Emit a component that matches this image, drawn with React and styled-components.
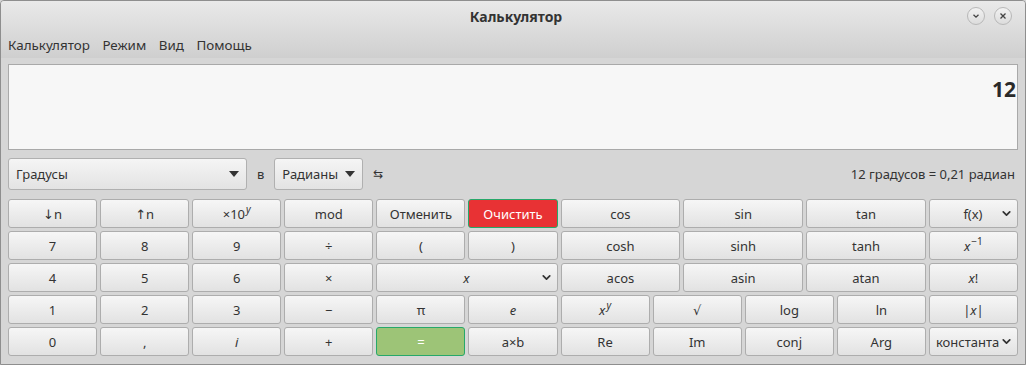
import React from 'react';
import styled, { createGlobalStyle } from 'styled-components';
import { ChevronDown } from 'lucide-react';

const Global = createGlobalStyle`
  html, body { margin: 0; padding: 0; }
  body { font-family: "Noto Sans", "DejaVu Sans", sans-serif; color: #333; background: #d6d6d6; }
`;

const Window = styled.div`
  width: 1026px;
  height: 365px;
  box-sizing: border-box;
  border: 1px solid #8e8e8e;
  border-radius: 4px 4px 0 0;
  background: #d6d6d6;
  display: flex;
  flex-direction: column;
  overflow: hidden;
`;

const Header = styled.div`
  background: linear-gradient(#e9e9e9, #cfcfcf);
`;

const TitleBar = styled.div`
  height: 31px;
  display: flex;
  align-items: center;
  justify-content: center;
  position: relative;
`;

const Title = styled.div`
  font-weight: bold;
  font-size: 14px;
  color: #333;
  margin-left: 6px;
`;

const WinButtons = styled.div`
  position: absolute;
  right: 13px;
  top: 6px;
  display: flex;
  gap: 9px;
`;

const WinButton = styled.div`
  width: 16px;
  height: 16px;
  border-radius: 50%;
  border: 1px solid #b8b8b8;
  background: linear-gradient(#f2f2f2, #dcdcdc);
  display: flex;
  align-items: center;
  justify-content: center;
  color: #555;
`;

const MenuBar = styled.div`
  height: 26px;
  display: flex;
  align-items: center;
  padding-left: 7px;
  gap: 12.5px;
  font-size: 13.4px;
  color: #333;
`;

const Body = styled.div`
  padding: 6px 7px 0;
  display: flex;
  flex-direction: column;
`;

const Display = styled.div`
  height: 86px;
  box-sizing: border-box;
  border: 1px solid #a9a9a9;
  background: #f7f7f7;
  display: flex;
  justify-content: flex-end;
  align-items: flex-start;
  padding: 10px 1px 0 0;
  font-size: 21px;
  font-weight: bold;
  color: #2a2a2a;
`;

const ConvRow = styled.div`
  margin-top: 8px;
  height: 32px;
  display: flex;
  align-items: center;
  font-size: 13px;
`;

const Combo = styled.div`
  width: ${p => p.w}px;
  height: 32px;
  box-sizing: border-box;
  border: 1px solid #b0b0b0;
  border-radius: 3px;
  background: linear-gradient(#f5f5f5, #e3e3e3);
  display: flex;
  align-items: center;
  justify-content: space-between;
  padding: 0 7px;
  color: #333;
`;

const Triangle = styled.span`
  width: 0;
  height: 0;
  border-left: 5px solid transparent;
  border-right: 5px solid transparent;
  border-top: 6px solid #333;
`;

const ConvLabel = styled.span`
  margin: 0 10px 0 10px;
  color: #333;
`;

const Swap = styled.span`
  margin-left: 10px;
  font-family: "DejaVu Sans", sans-serif;
  font-size: 12px;
  color: #333;
`;

const ConvResult = styled.span`
  margin-left: auto;
  margin-right: 3px;
  color: #333;
`;

const Keypad = styled.div`
  margin-top: 9px;
  display: grid;
  grid-template-columns: repeat(11, 1fr);
  grid-template-rows: repeat(5, 29px);
  gap: 3px;
`;

const Trig = styled.div`
  grid-column: 7 / 11;
  grid-row: 1 / 4;
  display: grid;
  grid-template-columns: repeat(3, 1fr);
  grid-template-rows: repeat(3, 29px);
  gap: 3px;
`;

const Key = styled.div`
  box-sizing: border-box;
  border: 1px solid ${p => p.$variant === 'clear' || p.$variant === 'equals' ? '#27a86a' : '#adadad'};
  border-radius: 3px;
  background: ${p =>
    p.$variant === 'clear' ? '#e83234' :
    p.$variant === 'equals' ? '#9dc477' :
    'linear-gradient(#f6f6f6, #e2e2e2)'};
  color: ${p => (p.$variant ? '#fff' : '#333')};
  font-size: 13px;
  display: flex;
  align-items: center;
  justify-content: ${p => (p.$menu ? 'space-between' : 'center')};
  padding: ${p => (p.$menu ? '0 4px 0 6px' : '0')};
  grid-column: ${p => p.$col || 'auto'};
  white-space: nowrap;
  overflow: hidden;
`;

const Spacer = styled.span`
  width: 10px;
`;

const I = styled.i`
  font-family: "Noto Sans", "DejaVu Sans", sans-serif;
`;

const Sup = styled.span`
  font-size: 10px;
  position: relative;
  top: -5px;
  margin-left: 1px;
`;

const Chev = () => <ChevronDown size={13} strokeWidth={3.2} color="#333" />;

function MenuKey({ children, col }) {
  return (
    <Key $menu $col={col}>
      <Spacer />
      <span>{children}</span>
      <Chev />
    </Key>
  );
}

export default function App() {
  return (
    <>
      <Global />
      <Window>
        <Header>
          <TitleBar>
            <Title>Калькулятор</Title>
            <WinButtons>
              <WinButton>
                <svg width="8" height="8" viewBox="0 0 8 8"><path d="M1.5 2.8 L4 5.2 L6.5 2.8" fill="none" stroke="#444" strokeWidth="1.3" /></svg>
              </WinButton>
              <WinButton>
                <svg width="8" height="8" viewBox="0 0 8 8"><path d="M1.5 1.5 L6.5 6.5 M6.5 1.5 L1.5 6.5" fill="none" stroke="#444" strokeWidth="1.3" /></svg>
              </WinButton>
            </WinButtons>
          </TitleBar>
          <MenuBar>
            <span>Калькулятор</span>
            <span>Режим</span>
            <span>Вид</span>
            <span>Помощь</span>
          </MenuBar>
        </Header>
        <Body>
          <Display>12</Display>
          <ConvRow>
            <Combo w={239}>
              <span>Градусы</span>
              <Triangle />
            </Combo>
            <ConvLabel>в</ConvLabel>
            <Combo w={89}>
              <span>Радианы</span>
              <Triangle />
            </Combo>
            <Swap>⇆</Swap>
            <ConvResult>12 градусов = 0,21 радиан</ConvResult>
          </ConvRow>
          <Keypad>
            <Key>↓n</Key>
            <Key>↑n</Key>
            <Key>×10<Sup><I>y</I></Sup></Key>
            <Key>mod</Key>
            <Key>Отменить</Key>
            <Key $variant="clear">Очистить</Key>
            <Trig>
              <Key>cos</Key>
              <Key>sin</Key>
              <Key>tan</Key>
              <Key>cosh</Key>
              <Key>sinh</Key>
              <Key>tanh</Key>
              <Key>acos</Key>
              <Key>asin</Key>
              <Key>atan</Key>
            </Trig>
            <MenuKey>f(x)</MenuKey>

            <Key>7</Key>
            <Key>8</Key>
            <Key>9</Key>
            <Key>÷</Key>
            <Key>(</Key>
            <Key>)</Key>
            <Key $col="11"><I>x</I><Sup>−1</Sup></Key>

            <Key>4</Key>
            <Key>5</Key>
            <Key>6</Key>
            <Key>×</Key>
            <MenuKey col="span 2"><I>x</I></MenuKey>
            <Key $col="11"><I>x</I>!</Key>

            <Key>1</Key>
            <Key>2</Key>
            <Key>3</Key>
            <Key>−</Key>
            <Key>π</Key>
            <Key><I>e</I></Key>
            <Key><I>x</I><Sup><I>y</I></Sup></Key>
            <Key>√</Key>
            <Key>log</Key>
            <Key>ln</Key>
            <Key>|<I>x</I>|</Key>

            <Key>0</Key>
            <Key>,</Key>
            <Key><I>i</I></Key>
            <Key>+</Key>
            <Key $variant="equals">=</Key>
            <Key>a×b</Key>
            <Key>Re</Key>
            <Key>Im</Key>
            <Key>conj</Key>
            <Key>Arg</Key>
            <Key $menu>
              <span>константа</span>
              <Chev />
            </Key>
          </Keypad>
        </Body>
      </Window>
    </>
  );
}
